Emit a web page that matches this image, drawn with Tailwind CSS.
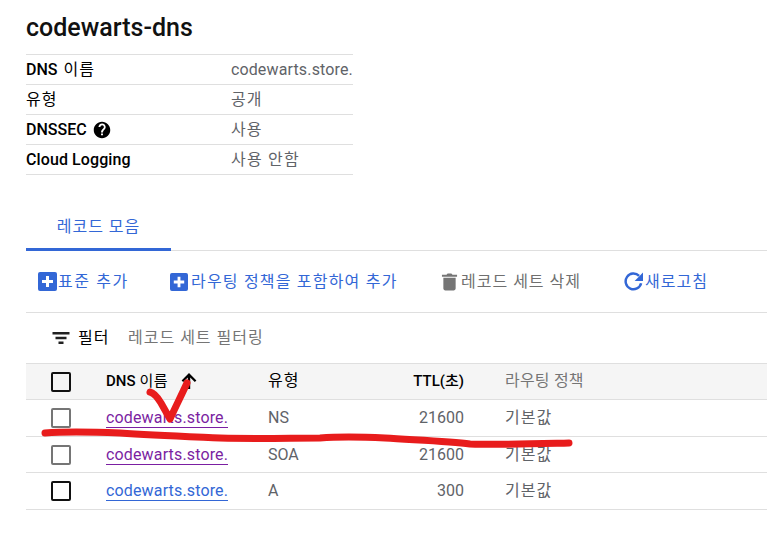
<!doctype html>
<html lang="ko">
  <head>
    <meta charset="UTF-8" />
    <title>codewarts-dns</title>
    <script src="https://cdn.jsdelivr.net/npm/@tailwindcss/browser@4"></script>
  </head>
  <body class="relative w-[767px] h-[536px] overflow-hidden bg-white font-['Roboto','Noto_Sans_CJK_KR',sans-serif] text-[16px] text-[#000]">
    <h1 class="pl-[26px] h-[54px] pt-[12px] text-[25px] leading-[32px] font-medium text-[#111]">codewarts-dns</h1>

    <!-- details -->
    <div class="ml-[26px] w-[327px] border-t border-[#dfdfdf]">
      <div class="flex items-center h-[30px] border-b border-[#dfdfdf]">
        <div class="w-[205px] font-medium">DNS <span class="font-normal ml-[2px] tracking-[1px]">이름</span></div>
        <div class="text-[#5f6368] tracking-[0.15px]">codewarts.store.</div>
      </div>
      <div class="flex items-center h-[30px] border-b border-[#dfdfdf]">
        <div class="w-[205px] tracking-[1px]">유형</div>
        <div class="text-[#5f6368] tracking-[1px]">공개</div>
      </div>
      <div class="flex items-center h-[30px] border-b border-[#dfdfdf]">
        <div class="w-[205px] flex items-center gap-[6px] font-medium">
          DNSSEC
          <svg class="w-[18px] h-[18px]" viewBox="0 0 24 24"><path fill="#000" d="M12 1C5.900 1 1 5.900 1 12s4.900 11 11 11 11-4.900 11-11S18.100 1 12 1zm1.300 18h-2.600v-2.500h2.600V19zm2.700-8.200-1.100 1.200c-.9.900-1.500 1.600-1.500 3.200h-2.700v-.6c0-1.300.6-2.400 1.500-3.300l1.600-1.700c.5-.4.700-1 .7-1.600 0-1.200-1-2.200-2.200-2.200S9.900 6.800 9.900 8H7.300c0-2.700 2.100-4.800 4.800-4.800s4.800 2.100 4.800 4.800c0 1.100-.4 2-.9 2.800z"/></svg>
        </div>
        <div class="text-[#5f6368] tracking-[1px]">사용</div>
      </div>
      <div class="flex items-center h-[30px] border-b border-[#dfdfdf]">
        <div class="w-[205px] font-medium tracking-[0.1px]">Cloud Logging</div>
        <div class="text-[#5f6368] tracking-[1.200px]">사용 안함</div>
      </div>
    </div>

    <!-- tab -->
    <div class="ml-[26px] mt-[42px] h-[34px] border-b border-[#dfdfdf]">
      <div class="w-[145px] h-[34px] border-b-[3px] border-[#3367d6] text-center text-[#3367d6] leading-[20px] tracking-[1px]">레코드 모음</div>
    </div>

    <!-- toolbar -->
    <div class="ml-[26px] h-[62px] flex items-center border-b border-[#dfdfdf] tracking-[1px]">
      <div class="flex items-center w-[132px] pl-[12px] text-[#3367d6]">
        <svg class="w-[19px] h-[19px] shrink-0" viewBox="0 0 19 19"><rect width="19" height="19" rx="2" fill="#3367d6"/><path d="M8 4h3v4h4v3h-4v4H8v-4H4V8h4z" fill="#fff"/></svg>
        <span class="ml-[1px] tracking-[1.600px]">표준 추가</span>
      </div>
      <div class="flex items-center w-[283px] text-[#3367d6] pl-[12px]">
        <svg class="w-[18px] h-[18px] shrink-0" viewBox="0 0 19 19"><rect width="19" height="19" rx="2" fill="#3367d6"/><path d="M8 4h3v4h4v3h-4v4H8v-4H4V8h4z" fill="#fff"/></svg>
        <span class="ml-[3px] tracking-[1.200px]">라우팅 정책을 포함하여 추가</span>
      </div>
      <div class="flex items-center w-[183px] text-[#6f6f6f]">
        <svg class="w-[17px] h-[19px] shrink-0" viewBox="0 0 18 20"><path fill="#757575" d="M2.500 6h13v11.500c0 1.200-1 2-2 2h-9c-1 0-2-.8-2-2zM1 2.800h4.800L7 1.500h4l1.200 1.300H17V5H1z"/></svg>
        <span class="ml-[3px]">레코드 세트 삭제</span>
      </div>
      <div class="flex items-center text-[#3367d6]">
        <svg class="w-[19px] h-[19px] shrink-0" viewBox="3.500 3.500 17 17"><path fill="none" stroke="#3367d6" stroke-width="2.200" d="M17 7a7 7 0 1 0 1.800 6.500"/><path fill="#3367d6" d="M20.500 4v7.500H13z"/></svg>
        <span class="ml-[2px]">새로고침</span>
      </div>
    </div>

    <!-- filter -->
    <div class="ml-[26px] h-[50px] flex items-center">
      <svg class="ml-[26px] w-[18px] h-[12px] shrink-0" viewBox="0 0 17 12"><path fill="#212121" d="M0 0h17v2.400H0zM3 4.800h11v2.400H3zM6 9.600h5V12H6z"/></svg>
      <span class="ml-[8px] w-[50px] tracking-[1px]">필터</span>
      <span class="text-[#757575] tracking-[1px]">레코드 세트 필터링</span>
    </div>

    <!-- records -->
    <table class="ml-[26px] w-[741px] table-fixed border-collapse">
      <colgroup>
        <col class="w-[80px]" />
        <col class="w-[162px]" />
        <col class="w-[100px]" />
        <col class="w-[96px]" />
        <col />
      </colgroup>
      <thead>
        <tr class="h-[36px] bg-[#f5f5f5] border-y border-[#dfdfdf]">
          <th class="p-0"><span class="block ml-[25px] w-[20px] h-[20px] rounded-[2px] border-2 border-[#111]"></span></th>
          <th class="p-0 pb-[1px] text-left text-[15px] font-medium"><span class="inline-flex items-center">DNS <span class="font-normal ml-1 tracking-[0.500px]">이름</span>
            <svg class="ml-[13px] w-[16px] h-[18px]" viewBox="0 0 16 18"><path fill="#000" d="M6.800 17V5.500L2.200 10 .6 8.400 8 1l7.400 7.400L13.800 10 9.200 5.500V17z"/></svg></span></th>
          <th class="p-0 pb-[1px] text-left font-normal tracking-[1px]">유형</th>
          <th class="p-0 pb-[1px] text-right text-[15px] font-medium">TTL(초)</th>
          <th class="p-0 pb-[1px] pl-[41px] text-left font-normal text-[#757575] tracking-[0.200px]">라우팅 정책</th>
        </tr>
      </thead>
      <tbody class="text-[#5f6368]">
        <tr class="h-[37px] border-b border-[#dfdfdf]">
          <td class="p-0"><span class="block ml-[25px] w-[20px] h-[20px] rounded-[2px] border-2 border-[#757575]"></span></td>
          <td class="p-0"><a class="text-[#7b1fa2] border-b border-[#7b1fa2] tracking-[0.15px]">codewarts.store.</a></td>
          <td class="p-0">NS</td>
          <td class="p-0 text-right">21600</td>
          <td class="p-0 pl-[41px] tracking-[1px]">기본값</td>
        </tr>
        <tr class="h-[36px] border-b border-[#dfdfdf]">
          <td class="p-0"><span class="block ml-[25px] w-[20px] h-[20px] rounded-[2px] border-2 border-[#757575]"></span></td>
          <td class="p-0"><a class="text-[#7b1fa2] border-b border-[#7b1fa2] tracking-[0.15px]">codewarts.store.</a></td>
          <td class="p-0">SOA</td>
          <td class="p-0 text-right">21600</td>
          <td class="p-0 pl-[41px] tracking-[1px]">기본값</td>
        </tr>
        <tr class="h-[37px] border-b border-[#dfdfdf]">
          <td class="p-0"><span class="block ml-[25px] w-[20px] h-[20px] rounded-[2px] border-2 border-[#111]"></span></td>
          <td class="p-0"><a class="text-[#3367d6] border-b border-[#3367d6] tracking-[0.15px]">codewarts.store.</a></td>
          <td class="p-0">A</td>
          <td class="p-0 text-right">300</td>
          <td class="p-0 pl-[41px] tracking-[1px]">기본값</td>
        </tr>
      </tbody>
    </table>

    <!-- red marker scribble on top of the screenshot -->
    <svg class="absolute left-0 top-0 pointer-events-none" width="767" height="536" viewBox="0 0 767 536" fill="none" stroke="#e81c1c" stroke-linecap="round" stroke-linejoin="round">
      <path stroke-width="7" d="M45 433C70 431 95 432 120 433C150 435 175 436 220 438C260 439 290 438 320 438C345 436 365 437 385 438C415 440 450 441 470 444C500 445 530 444 569 443"/>
      <path stroke-width="7" d="M150 392C154 393 158 398 161 403L170 419C175 408 182 394 187 383"/>
    </svg>
  </body>
</html>
